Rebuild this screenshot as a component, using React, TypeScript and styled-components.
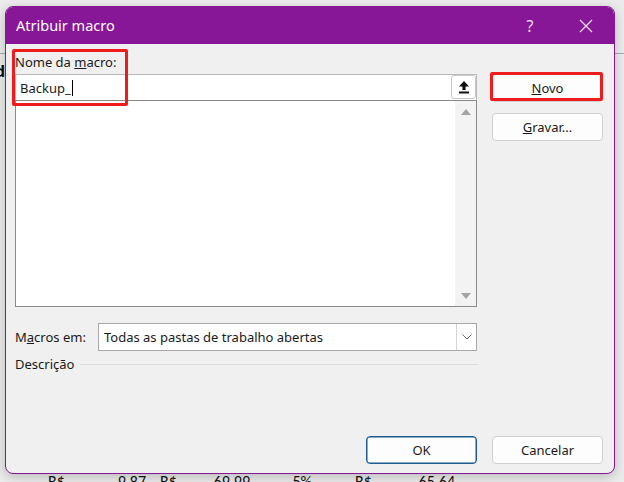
import { FC } from "react"
import styled, { createGlobalStyle } from "styled-components"

const GlobalStyle = createGlobalStyle`
  html, body {
    margin: 0;
    padding: 0;
    background: #e9e9e9;
  }
  * {
    box-sizing: border-box;
  }
`

const UI_FONT = `"Segoe UI", "Noto Sans", "Liberation Sans", sans-serif`

const StyledPage = styled.div`
  position: relative;
  width: 624px;
  height: 482px;
  overflow: hidden;
  font-family: ${UI_FONT};
`

/* spreadsheet behind the dialog */
const StyledSheet = styled.div`
  display: flex;
  flex-direction: column;
  height: 100%;
  background: #ececec;
`

const StyledGridLine = styled.div`
  margin-top: 53px;
  height: 1px;
  background: #a9a9a9;
`

const StyledCutGlyph = styled.span`
  margin: 8px 0 0 -5px;
  font-size: 16px;
  font-weight: 700;
  line-height: 18px;
  color: #111;
`

const StyledSheetRow = styled.div`
  display: grid;
  grid-template-columns: 46px 102px 10px 94px 62px 39px 104px;
  margin-top: auto;
  margin-bottom: -10px;
  height: 20px;
  font-family: "Calibri", "Carlito", "Liberation Sans", sans-serif;
  font-size: 16px;
  line-height: 20px;
  color: #111;
`

const StyledCell = styled.div<{ $align?: "between" | "end" }>`
  display: flex;
  justify-content: ${({ $align }) =>
    $align === "end" ? "flex-end" : "space-between"};
  padding: 0 2px;
`

/* dialog */
const StyledDialog = styled.div`
  position: absolute;
  top: 6px;
  left: 5px;
  width: 610px;
  height: 468px;
  display: flex;
  flex-direction: column;
  background: #f0f0f0;
  border: 1px solid #881798;
  border-radius: 8px;
  box-shadow: 0 3px 12px rgba(0, 0, 0, 0.22);
  overflow: hidden;
`

const StyledTitleBar = styled.div`
  display: flex;
  align-items: center;
  height: 37px;
  padding-left: 10px;
  background: #881798;
  color: #fff;
`

const StyledTitle = styled.div`
  flex: 1;
  font-size: 14.5px;
  padding-bottom: 1px;
`

const StyledCaptionButton = styled.div`
  display: flex;
  align-items: center;
  justify-content: center;
  width: 56px;
  height: 100%;
  font-size: 16px;
  color: #f3dff5;
`

const StyledBody = styled.div`
  position: relative;
  flex: 1;
  display: flex;
  flex-direction: column;
  padding: 9px 11px 9px 9px;
  font-size: 13px;
  color: #1a1a1a;
`

const StyledTop = styled.div`
  display: grid;
  grid-template-columns: 462px 111px;
  column-gap: 15px;
`

const StyledColumn = styled.div`
  display: flex;
  flex-direction: column;
`

const StyledLabel = styled.label`
  height: 21px;
  line-height: 18px;
`

const StyledNameInput = styled.div`
  position: relative;
  display: flex;
  align-items: center;
  height: 26px;
  padding-left: 4px;
  background: #fff;
  border: 1px solid #b9b9b9;
  border-bottom: none;
`

const StyledCaret = styled.span`
  display: inline-block;
  width: 1px;
  height: 16px;
  margin-left: 1px;
  vertical-align: middle;
  background: #000;
`

const StyledUploadButton = styled.div`
  position: absolute;
  top: 0;
  right: 0;
  display: flex;
  align-items: center;
  justify-content: center;
  width: 25px;
  height: 24px;
  background: #fff;
  border: 1px solid #c9c9c9;
  border-radius: 3px;
`

const StyledList = styled.div`
  display: flex;
  justify-content: flex-end;
  height: 207px;
  background: #fff;
  border: 1px solid #8a8a8a;
`

const StyledScrollbar = styled.div`
  display: flex;
  flex-direction: column;
  justify-content: space-between;
  align-items: center;
  width: 21px;
  padding: 8px 0 7px;
  background: #f3f3f3;
`

const StyledButton = styled.button<{ $primary?: boolean }>`
  width: 111px;
  height: 28px;
  padding: 0;
  font-family: inherit;
  font-size: 13px;
  color: #1a1a1a;
  background: #fdfdfd;
  border: 1px solid ${({ $primary }) => ($primary ? "#1d5b8f" : "#d0d0d0")};
  border-radius: 4px;
  ${({ $primary }) => ($primary ? "box-shadow: inset 0 0 0 0.5px #1d5b8f;" : "")}
`

const StyledButtonStack = styled.div`
  display: flex;
  flex-direction: column;
  gap: 11px;
  padding-top: 21px;
`

const StyledMacrosRow = styled.div`
  display: flex;
  align-items: center;
  margin-top: 16px;
  width: 462px;
`

const StyledMacrosLabel = styled.label`
  width: 83px;
`

const StyledSelect = styled.div`
  flex: 1;
  display: flex;
  align-items: stretch;
  height: 28px;
  background: #fff;
  border: 1px solid #a8a8a8;
`

const StyledSelectValue = styled.div`
  flex: 1;
  display: flex;
  align-items: center;
  padding-left: 5px;
`

const StyledChevron = styled.div`
  display: flex;
  align-items: center;
  justify-content: center;
  width: 20px;
  border-left: 1px solid #d4d4d4;
`

const StyledDescription = styled.div`
  display: flex;
  align-items: center;
  gap: 6px;
  width: 463px;
  margin-top: 4px;
  height: 18px;
`

const StyledRule = styled.div`
  flex: 1;
  height: 1px;
  background: #dcdcdc;
`

const StyledFooter = styled.div`
  display: flex;
  justify-content: flex-end;
  gap: 15px;
  margin-top: auto;
`

const StyledHighlight = styled.div`
  position: absolute;
  border: 3px solid #ee1c1c;
  border-radius: 2px;
  pointer-events: none;
`

const UploadIcon: FC = () => (
  <svg width='12' height='14' viewBox='0 0 12 14'>
    <path d='M6 1 L11 6.5 H7.6 V10 H4.4 V6.5 H1 Z' fill='#111' />
    <rect x='1' y='11.5' width='10' height='2' fill='#111' />
  </svg>
)

const Triangle: FC<{ down?: boolean }> = ({ down }) => (
  <svg width='10' height='6' viewBox='0 0 10 6'>
    <path d={down ? "M0 0 H10 L5 6 Z" : "M5 0 L10 6 H0 Z"} fill='#a3a3a3' />
  </svg>
)

const App: FC = () => (
  <>
    <GlobalStyle />
    <StyledPage>
      <StyledSheet>
        <StyledGridLine />
        <StyledCutGlyph>d</StyledCutGlyph>
        <StyledSheetRow>
          <div />
          <StyledCell>
            <span>R$</span>
            <span>9,87</span>
          </StyledCell>
          <div />
          <StyledCell>
            <span>R$</span>
            <span>69,99</span>
          </StyledCell>
          <StyledCell $align='end'>5%</StyledCell>
          <div />
          <StyledCell>
            <span>R$</span>
            <span>65,64</span>
          </StyledCell>
        </StyledSheetRow>
      </StyledSheet>

      <StyledDialog>
        <StyledTitleBar>
          <StyledTitle>Atribuir macro</StyledTitle>
          <StyledCaptionButton>?</StyledCaptionButton>
          <StyledCaptionButton>
            <svg width='14' height='14' viewBox='0 0 14 14'>
              <path
                d='M1 1 L13 13 M13 1 L1 13'
                stroke='#f3dff5'
                strokeWidth='1.3'
              />
            </svg>
          </StyledCaptionButton>
        </StyledTitleBar>

        <StyledBody>
          <StyledTop>
            <StyledColumn>
              <StyledLabel>
                Nome da <u>m</u>acro:
              </StyledLabel>
              <StyledNameInput>
                <span>Backup_</span>
                <StyledCaret />
                <StyledUploadButton>
                  <UploadIcon />
                </StyledUploadButton>
              </StyledNameInput>
              <StyledList>
                <StyledScrollbar>
                  <Triangle />
                  <Triangle down />
                </StyledScrollbar>
              </StyledList>
            </StyledColumn>
            <StyledButtonStack>
              <StyledButton>
                <u>N</u>ovo
              </StyledButton>
              <StyledButton>
                <u>G</u>ravar...
              </StyledButton>
            </StyledButtonStack>
          </StyledTop>

          <StyledMacrosRow>
            <StyledMacrosLabel>
              M<u>a</u>cros em:
            </StyledMacrosLabel>
            <StyledSelect>
              <StyledSelectValue>
                Todas as pastas de trabalho abertas
              </StyledSelectValue>
              <StyledChevron>
                <svg width='10' height='6' viewBox='0 0 10 6'>
                  <path
                    d='M0.5 0.5 L5 5 L9.5 0.5'
                    stroke='#6b6b6b'
                    strokeWidth='1'
                    fill='none'
                  />
                </svg>
              </StyledChevron>
            </StyledSelect>
          </StyledMacrosRow>

          <StyledDescription>
            <span>Descrição</span>
            <StyledRule />
          </StyledDescription>

          <StyledFooter>
            <StyledButton $primary>OK</StyledButton>
            <StyledButton>Cancelar</StyledButton>
          </StyledFooter>

          <StyledHighlight
            style={{ left: 6, top: 5, width: 116, height: 57 }}
          />
          <StyledHighlight
            style={{ left: 484, top: 28, width: 113, height: 29 }}
          />
        </StyledBody>
      </StyledDialog>
    </StyledPage>
  </>
)

export default App
